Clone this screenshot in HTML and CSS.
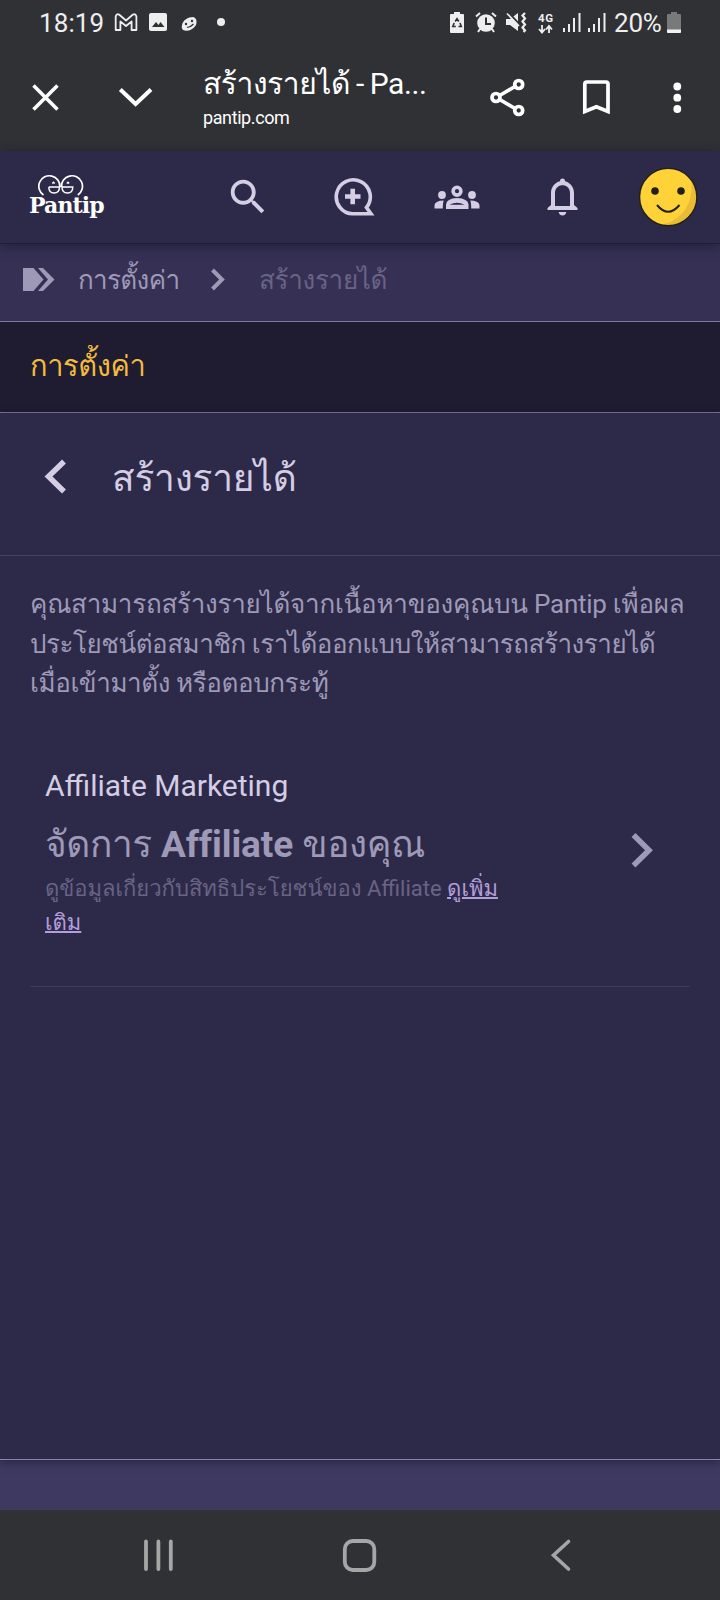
FILE: index.html
```
<!DOCTYPE html>
<html lang="th">
<head>
<meta charset="utf-8">
<title>สร้างรายได้ - Pantip</title>
<link rel="stylesheet" href="styles.css">
</head>
<body>
<div class="phone">
  <div class="status">
    <span class="clock">18:19</span>
    <svg class="st-gmail" width="24" height="20" viewBox="114 12 24 20" fill="none" stroke="#eee" stroke-width="1.800" stroke-linejoin="round"><path d="M115.700 30V16.500Q116.500 13.500 119 14.500L126 20.500L133 14.500Q135.700 13.500 136.400 16.500V30H131.600V21.500L126 26L120.400 21.500V30Z"/></svg>
    <svg class="st-image" width="18" height="18" viewBox="0 0 18 18"><rect width="18" height="18" rx="2" fill="#eee"/><path d="M3 14l4-5 2.500 3 2-3 4 5z" fill="#303134"/></svg>
    <svg class="st-bean" width="17" height="16" viewBox="0 0 17 16"><path d="M1 9C2 4 7 1 12 1C16 2 16 6 15 9C12 14 6 16 2 14Q0 12 1 9Z" fill="#eee"/><circle cx="5" cy="8" r="1.200" fill="#303134"/><circle cx="11" cy="5" r="1.200" fill="#303134"/><path d="M6 11.500Q10 11 12.500 8" fill="none" stroke="#303134" stroke-width="1.200"/></svg>
    <span class="st-dot"></span>
    <svg class="st-saver" width="14" height="21" viewBox="0 0 14 21"><path d="M4 0h6v2h3q1 0 1 1v17q0 1-1 1H1q-1 0-1-1V3q0-1 1-1h3z" fill="#eee"/><path d="M5.200 9.500L7 6.800L8.800 9.500M10 11l1.300 3.500H8.500M5.800 14.500H2.800L4.200 11" fill="none" stroke="#303134" stroke-width="1.600"/></svg>
    <svg class="st-alarm" width="22" height="21" viewBox="0 0 22 21"><circle cx="11" cy="11" r="8.800" fill="#eee"/><path d="M1 4.500L5 1M21 4.500L17 1M5 17l-2 3M17 17l2 3" stroke="#eee" stroke-width="2"/><path d="M11 5.500V12h5" fill="none" stroke="#303134" stroke-width="2"/></svg>
    <svg class="st-mute" width="22" height="22" viewBox="0 0 22 22"><path d="M1 7h4l8-6v18l-8-6H1z" fill="#eee"/><path d="M3 0l12 13" stroke="#303134" stroke-width="2"/><path d="M2 1.500l12 12.500" stroke="#eee" stroke-width="1.700"/><path d="M20 1l-2.500 2.500 2.500 3-2.500 3 2.500 3-2.500 3 2.500 3-1.500 1.500" fill="none" stroke="#eee" stroke-width="2.200"/></svg>
    <svg class="st-4g" width="17" height="22" viewBox="0 0 17 22"><text x="1" y="10" font-size="11.500" textLength="15" fill="#eee" class="net">4G</text><path d="M5 13v7M2 17l3 3.500L8 17M12 21v-7M9 17.500l3-3.500 3 3.500" fill="none" stroke="#eee" stroke-width="1.800"/></svg>
    <svg class="st-sig" width="18" height="20" viewBox="0 0 18 20" fill="#eee"><path d="M0 15h2v4H0zM5 11h2v8H5zM10 5h2v14h-2zM15.500 0h2v19h-2z"/></svg>
    <svg class="st-sig st-sig2" width="18" height="20" viewBox="0 0 18 20" fill="#eee"><path d="M0 15h2v4H0zM5 11h2v8H5zM10 5h2v14h-2zM15.500 0h2v19h-2z"/></svg>
    <span class="percent">20%</span>
    <svg class="st-batt" width="14" height="21" viewBox="0 0 14 21"><path d="M4 0h6v2h3q1 0 1 1v17q0 1-1 1H1q-1 0-1-1V3q0-1 1-1h3z" fill="#78797b"/><path d="M0 17.500h14V20q0 1-1 1H1q-1 0-1-1z" fill="#f2f2f2"/></svg>
  </div>

  <div class="browser">
    <svg class="b-close" width="28" height="28" viewBox="32 84 28 28" fill="none" stroke="#fff" stroke-width="3.600"><path d="M33.500 85.500L57.500 109.500M57.500 85.500L33.500 109.500"/></svg>
    <svg class="b-down" width="36" height="22" viewBox="118 86 36 22" fill="none" stroke="#fff" stroke-width="4"><path d="M120.300 89.500L135.600 104L151 89.500"/></svg>
    <div class="page-id">
      <div class="page-title">สร้างรายได้ - Pa...</div>
      <div class="page-host">pantip.com</div>
    </div>
    <svg class="b-share" width="38" height="42" viewBox="489 77 38 42" fill="none" stroke="#fff" stroke-width="3.700"><path d="M500.500 95L515 86.500M500.500 100L515 108.500"/><circle cx="518.700" cy="84.500" r="4"/><circle cx="496" cy="97.500" r="4"/><circle cx="518.700" cy="110.500" r="4"/></svg>
    <svg class="b-mark" width="30" height="38" viewBox="582 78 30 38" fill="none" stroke="#fff" stroke-width="3.700"><path d="M584.800 111.500V84Q584.800 82 586.800 82H606Q608 82 608 84V111.500L596.400 106.800Z"/></svg>
    <svg class="b-more" width="10" height="34" viewBox="672 81 10 34" fill="#fff"><circle cx="677.300" cy="86.500" r="3.900"/><circle cx="677.300" cy="97.700" r="3.900"/><circle cx="677.300" cy="109" r="3.900"/></svg>
  </div>

  <header class="site">
    <div class="logo">
      <svg width="48" height="24" viewBox="36 173 48 24" fill="none" stroke="#fff"><path d="M43.500 195A10.500 10.500 0 1 1 59.800 187M61.500 187A10.500 10.500 0 1 1 77.800 195" stroke-width="1.700"/><path d="M48.800 187H59.500Q59.500 193 54 193Q48.800 193 48.800 187M62 187H72.800Q72.800 193 67.500 193Q62 193 62 187M59 186.500h3.500M52.300 183.500l1.200-1.200 1.200 1.200M66.800 183.500l1.200-1.200 1.200 1.200" stroke-width="1.400"/></svg>
      <span class="wordmark">Pantip</span>
    </div>
    <svg class="h-search" width="46" height="46" viewBox="0 0 24 24" fill="#d4cde4"><path d="M15.500 14h-.79l-.28-.27C15.410 12.590 16 11.110 16 9.500 16 5.910 13.090 3 9.500 3S3 5.910 3 9.500 5.910 16 9.500 16c1.610 0 3.090-.59 4.230-1.570l.27.28v.79l5 4.990L20.490 19l-4.990-5zm-6 0C7.010 14 5 11.990 5 9.500S7.010 5 9.500 5 14 7.010 14 9.500 11.990 14 9.500 14z"/></svg>
    <svg class="h-add" width="44" height="42" viewBox="332 176 44 42" fill="none" stroke="#d4cde4" stroke-width="3.600"><path d="M352.800 213.800A17 17 0 1 1 366.500 207.500L371 213.800Z"/><path d="M345 196.500h15.500M352.700 188.700v15.500" stroke-width="4.600"/></svg>
    <svg class="h-groups" width="46" height="26" viewBox="434.500 184.500 46 26" fill="#d4cde4"><path d="M446.500 209.500V205Q447 199 457.500 198.500Q468.500 199 469 205V209.500Z"/><path d="M450 205.300Q457.500 201 465 205.300Z" fill="#2d2a49"/><circle cx="457.500" cy="191.700" r="3.900" fill="none" stroke="#d4cde4" stroke-width="3.600"/><circle cx="442.500" cy="195.500" r="3.900"/><circle cx="472.500" cy="195.500" r="3.900"/><path d="M435 209V205.500Q436 201 444.300 201Q443.300 203 443.300 209ZM480 209V205.500Q479 201 470.700 201Q471.700 203 471.700 209Z"/></svg>
    <svg class="h-bell" width="34" height="42" viewBox="545 176 34 42" fill="#d4cde4"><path d="M547.500 210V208L551 205V193C551 187 555 182.500 560 181.300Q560 178.500 562.500 178.500Q565 178.500 565 181.300C570 182.500 574 187 574 193V205L577.500 208V210ZM555 206H570V193C570 182.500 555 182.500 555 193Z" fill-rule="evenodd"/><path d="M558.700 212h7.600q-.7 3.500-3.800 3.500t-3.800-3.500z"/></svg>
    <svg class="avatar" width="60" height="60" viewBox="638 167 60 60"><circle cx="668.200" cy="197" r="28.500" fill="#e8bd35"/><path d="M661 224.500C678 223 695 206 691 179A28.500 28.500 0 1 0 661 224.500Z" fill="#ffd338"/><circle cx="668.200" cy="197" r="28.700" fill="none" stroke="#242019" stroke-width="1.400"/><circle cx="655" cy="191" r="3.800" fill="#242019"/><circle cx="681" cy="191" r="3.800" fill="#242019"/><path d="M657 205Q668 218.500 679.500 205" fill="none" stroke="#242019" stroke-width="2"/></svg>
  </header>

  <nav class="crumbs">
    <svg class="c-tag" width="34" height="26" viewBox="22 267 34 26" fill="#9f99b8"><path d="M23 268H33.500L43.500 279.500L33.500 291H23ZM38 268H43L54.500 279.500L43 291H38L48 279.500Z"/></svg>
    <a class="c-link">การตั้งค่า</a>
    <svg class="c-sep" width="18" height="26" viewBox="209 267 18 26" fill="none" stroke="#9f99b8" stroke-width="4"><path d="M212.500 270L222 279.500L212.500 289"/></svg>
    <span class="c-here">สร้างรายได้</span>
  </nav>

  <div class="section">การตั้งค่า</div>

  <main class="panel">
    <div class="panel-head">
      <svg width="24" height="36" viewBox="43 458 24 36" fill="none" stroke="#d4cde4" stroke-width="5.500"><path d="M64 461.500L48.500 476.500L64 491.500"/></svg>
      <h1>สร้างรายได้</h1>
    </div>
    <p class="intro"><span class="l1">คุณสามารถสร้างรายได้จากเนื้อหาของคุณบน Pantip เพื่อผล</span><br><span class="l2">ประโยชน์ต่อสมาชิก เราได้ออกแบบให้สามารถสร้างรายได้</span><br><span class="l3">เมื่อเข้ามาตั้ง หรือตอบกระทู้</span></p>
    <section class="item">
      <div class="item-text">
        <h2>Affiliate Marketing</h2>
        <h3><span class="thai">จัดการ</span> <b>Affiliate</b> <span class="thai">ของคุณ</span></h3>
        <p>ดูข้อมูลเกี่ยวกับสิทธิประโยชน์ของ Affiliate <a>ดูเพิ่ม<br>เติม</a></p>
      </div>
      <svg class="item-go" width="24" height="36" viewBox="630 832 24 36" fill="none" stroke="#9f99b8" stroke-width="5.500"><path d="M633.500 835L649 850.300L633.500 865.500"/></svg>
    </section>
  </main>

  <div class="foot"></div>

  <div class="softkeys">
    <svg class="k-recent" width="32" height="34" viewBox="142 1538 32 34" stroke="#a6a6a6" stroke-width="3.800" stroke-linecap="round"><path d="M146 1541.500V1569M158.400 1541.500V1569M170.800 1541.500V1569"/></svg>
    <svg class="k-home" width="36" height="36" viewBox="341 1537 36 36" fill="none" stroke="#a6a6a6" stroke-width="3.800"><rect x="344.800" y="1541" width="29.500" height="29" rx="8"/></svg>
    <svg class="k-back" width="22" height="34" viewBox="550 1538 22 34" fill="none" stroke="#a6a6a6" stroke-width="3.600" stroke-linecap="round"><path d="M568.500 1541.500L553.500 1555.300L568.500 1569"/></svg>
  </div>
</div>
</body>
</html>
```
FILE: styles.css
```
* { box-sizing: border-box; }
body {
  margin: 0;
  background: #303134;
  font-family: Roboto, Loma, sans-serif;
}
h1, h2, h3, p { margin: 0; font-weight: 400; }
svg { display: block; flex: none; }
.phone { width: 720px; height: 1600px; display: flex; flex-direction: column; overflow: hidden; }

/* system status bar */
.status { height: 46px; display: flex; align-items: flex-start; padding: 12px 0 0 39px; color: #eee; white-space: nowrap; }
.clock { width: 75px; font-size: 26px; line-height: 22px; letter-spacing: .1px; }
.st-image { margin: 1px 0 0 11px; }
.st-bean { margin: 4px 0 0 14px; }
.st-dot { width: 8px; height: 8px; margin: 6px 0 0 19px; border-radius: 50%; background: #eee; }
.st-saver { margin-left: 225px; }
.st-alarm { margin-left: 11px; }
.st-mute { margin-left: 8px; }
.st-4g { margin-left: 10px; }
.net { font-family: Roboto, sans-serif; font-weight: 700; }
.st-sig { margin: 1px 0 0 9px; }
.st-sig2 { margin-left: 7px; }
.percent { width: 53px; margin-left: 8px; font-size: 26px; line-height: 22px; letter-spacing: -0.2px; }

/* browser toolbar */
.browser { height: 105px; display: flex; padding-left: 32px; color: #fff; }
.b-close { margin-top: 38px; }
.b-down { margin: 40px 0 0 58px; }
.page-id { width: 236px; margin-left: 49px; padding-top: 17px; white-space: nowrap; }
.page-title { font-size: 30px; line-height: 42px; height: 42px; letter-spacing: -.45px; word-spacing: -1px; }
.page-host { font-size: 18px; line-height: 26px; letter-spacing: -0.4px; }
.b-share { margin: 31px 0 0 50px; }
.b-mark { margin: 32px 0 0 55px; }
.b-more { margin: 35px 0 0 60px; }

/* site header */
.site { height: 93px; flex: none; display: flex; padding-left: 28px; background: #2d2a49; border-bottom: 1px solid #1f1c38; box-shadow: 0 2px 10px rgba(20, 16, 40, .55); z-index: 1; }
.logo { width: 80px; padding-top: 22px; }
.logo svg { margin-left: 8px; }
.wordmark { display: block; margin: -8px 0 0 1px; color: #fff; font: 700 22px/32px "DejaVu Serif", serif; letter-spacing: -.9px; }
.h-search { margin: 22.500px 0 0 116.500px; }
.h-add { margin: 25px 0 0 61px; }
.h-groups { margin: 33px 0 0 58.500px; }
.h-bell { margin: 25px 0 0 65px; }
.avatar { margin: 16px 0 0 59px; }

/* breadcrumbs */
.crumbs { height: 78px; display: flex; padding-left: 22px; background: #353054; border-bottom: 1px solid #7e78a0; white-space: nowrap; font-size: 26px; line-height: 36px; }
.c-tag { margin-top: 23px; }
.c-link { width: 131px; margin: 18px 0 0 22px; color: #9f99b8; letter-spacing: -.65px; }
.c-sep { margin-top: 23px; }
.c-here { margin: 18px 0 0 32px; color: #696385; letter-spacing: -.3px; }

.section { height: 91px; padding: 24px 0 0 30px; background: #1f1c31; border-bottom: 1px solid #7e78a0; color: #f2bb3f; font-size: 29px; line-height: 40px; letter-spacing: -.4px; }

.panel { height: 1047px; flex: none; background: #2d2a49; border-bottom: 1px solid #8a84aa; box-shadow: 0 2px 8px rgba(20, 16, 40, .5); z-index: 1; }
.panel-head { height: 143px; display: flex; padding: 45px 0 0 43px; border-bottom: 1px solid #45405f; color: #d4cde4; }
.panel-head h1 { margin: -5px 0 0 45px; font-size: 37px; line-height: 52px; white-space: nowrap; letter-spacing: -.2px; }
.intro { padding: 29px 0 0 30px; color: #9f99b8; font-size: 26px; line-height: 39.500px; white-space: nowrap; }
.l1 { letter-spacing: -.25px; }
.l2 { letter-spacing: -.48px; }
.l3 { letter-spacing: -.42px; }
.item { height: 247px; margin: 36px 30px 0; padding: 22px 15px 0; display: flex; border-bottom: 1px solid #3f3b5a; }
.item-text { width: 585px; white-space: nowrap; }
.item h2 { color: #d4cde4; font-size: 30px; line-height: 48px; }
.item h3 { padding-top: 2px; color: #9f99b8; font-size: 37px; line-height: 66px; }
.thai { letter-spacing: -.4px; }
.item b { font-weight: 700; letter-spacing: -.1px; }
.item p { margin-top: -6px; color: #696385; font-size: 22px; line-height: 34px; }
.item a { color: #b39ddb; text-decoration: underline; text-decoration-thickness: 2px; }
.item-go { margin-top: 70px; }

.foot { height: 50px; flex: none; background: #3d3960; }

/* system navigation keys */
.softkeys { height: 90px; flex: none; display: flex; padding: 28px 0 0 142px; background: #303134; }
.k-home { margin: -1px 0 0 167px; }
.k-back { margin-left: 173px; }
```
